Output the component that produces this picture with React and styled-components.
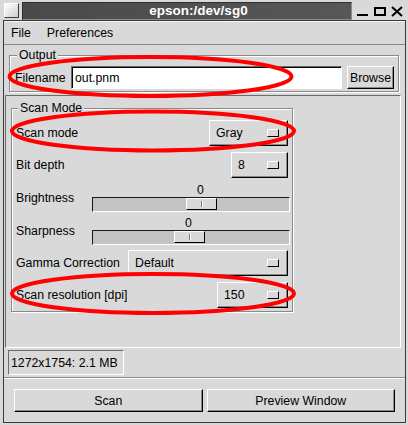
import React from "react";
import styled, { createGlobalStyle } from "styled-components";

const GlobalStyle = createGlobalStyle`
  html, body {
    margin: 0;
    padding: 0;
    background: #d9d9d9;
  }
  * {
    box-sizing: border-box;
  }
`;

const App = () => {
  return (
    <>
      <GlobalStyle />
      <Window>
        <TitleBar>
          <WinIcon />
          <Title>epson:/dev/sg0</Title>
          <TitleControls width="48" height="14" viewBox="0 0 48 14">
            <path d="M2 11h11" stroke="#000" strokeWidth="2" fill="none" />
            <rect x="20" y="4" width="10" height="7" stroke="#000" strokeWidth="2" fill="none" />
            <path d="M37 3l10 9M47 3l-10 9" stroke="#000" strokeWidth="2" fill="none" />
          </TitleControls>
        </TitleBar>

        <Client>
          <MenuBar>
            <MenuItem>File</MenuItem>
            <MenuItem>Preferences</MenuItem>
          </MenuBar>

          <OutputFrame>
            <Legend>Output</Legend>
            <FileRow>
              <FileLabel>Filename</FileLabel>
              <Entry>out.pnm</Entry>
              <BrowseButton>Browse</BrowseButton>
            </FileRow>
          </OutputFrame>

          <ScanArea>
            <ScanFrame>
              <Legend>Scan Mode</Legend>
              <Row $h={26} $mt={0}>
                <RowLabel>Scan mode</RowLabel>
                <OptionMenu $w={79}>
                  Gray
                  <Indicator />
                </OptionMenu>
              </Row>
              <Row $h={26} $mt={6}>
                <RowLabel>Bit depth</RowLabel>
                <OptionMenu $w={57}>
                  8
                  <Indicator />
                </OptionMenu>
              </Row>
              <Row $h={29} $mt={5}>
                <RowLabel>Brightness</RowLabel>
                <Slider value={0} offset={93} />
              </Row>
              <Row $h={29} $mt={4}>
                <RowLabel>Sharpness</RowLabel>
                <Slider value={0} offset={81} />
              </Row>
              <Row $h={26} $mt={5}>
                <RowLabel>Gamma Correction</RowLabel>
                <OptionMenu $w={160}>
                  Default
                  <Indicator />
                </OptionMenu>
              </Row>
              <Row $h={26} $mt={6}>
                <RowLabel>Scan resolution [dpi]</RowLabel>
                <OptionMenu $w={71}>
                  150
                  <Indicator />
                </OptionMenu>
              </Row>
            </ScanFrame>
          </ScanArea>

          <StatusBox>1272x1754: 2.1 MB</StatusBox>
          <Separator />

          <ButtonRow>
            <PushButton>Scan</PushButton>
            <PushButton>Preview Window</PushButton>
          </ButtonRow>
        </Client>

        <Marks width="408" height="425" viewBox="0 0 408 425">
          <ellipse cx="150.5" cy="76.5" rx="141" ry="19.5" />
          <ellipse cx="153" cy="131" rx="141" ry="19.5" />
          <ellipse cx="153" cy="293.5" rx="141" ry="19.5" />
        </Marks>
      </Window>
    </>
  );
};

const Slider = ({ value, offset }) => {
  return (
    <SliderBox>
      <SliderValue style={{ marginLeft: offset }}>{value}</SliderValue>
      <Trough>
        <Thumb style={{ marginLeft: offset }} />
      </Trough>
    </SliderBox>
  );
};

export default App;

const Window = styled.div`
  position: relative;
  width: 408px;
  height: 425px;
  display: flex;
  flex-direction: column;
  padding: 1px 2px 2px 3px;
  background: #d9d9d9;
  font-family: "Liberation Sans", Arial, sans-serif;
  font-size: 12.3px;
  line-height: 14px;
  color: #000;
  overflow: hidden;
`;

const TitleBar = styled.div`
  height: 19px;
  display: flex;
  align-items: center;
`;

const WinIcon = styled.div`
  width: 15px;
  height: 15px;
  margin-left: 1px;
  background: linear-gradient(135deg, #ffffff, #cdcdcd);
  border: 1px solid;
  border-color: #ffffff #3a3a3a #3a3a3a #ffffff;
`;

const Title = styled.div`
  width: 330px;
  height: 18px;
  margin-left: 3px;
  padding-left: 23px;
  background: linear-gradient(90deg, #4a4a4a, #575757);
  border: 1px solid;
  border-color: #2e2e2e #8c8c8c #8c8c8c #2e2e2e;
  color: #ffffff;
  font-size: 13.5px;
  font-weight: bold;
  line-height: 16px;
  text-align: center;
`;

const TitleControls = styled.svg`
  margin-left: 3px;
  display: block;
`;

const Client = styled.div`
  flex: 1;
  display: flex;
  flex-direction: column;
  border: 1px solid #3a3a3a;
`;

const MenuBar = styled.div`
  height: 24px;
  display: flex;
  align-items: center;
  gap: 16px;
  padding-left: 7px;
  border-top: 1px solid #f4f4f4;
  border-bottom: 1px solid #8c8c8c;
`;

const MenuItem = styled.span`
  white-space: nowrap;
`;

const Frame = styled.fieldset`
  min-width: 0;
  margin: 0;
  border: 1px solid #8a8a8a;
  box-shadow: inset 1px 1px 0 #ffffff, 1px 1px 0 #ffffff;
`;

const OutputFrame = styled(Frame)`
  margin: 3px 6px 0 5px;
  padding: 4px 4px 2px 5px;
`;

const Legend = styled.legend`
  margin-left: 2px;
  padding: 0 2px;
  background: #d9d9d9;
  line-height: 14px;
`;

const FileRow = styled.div`
  height: 23px;
  display: flex;
  align-items: center;
`;

const FileLabel = styled.span`
  width: 56px;
  flex: none;
`;

const Entry = styled.div`
  flex: 1;
  height: 23px;
  padding: 0 3px;
  display: flex;
  align-items: center;
  background: #ffffff;
  border: 1px solid;
  border-color: #6b6b6b #ffffff #ffffff #6b6b6b;
  box-shadow: inset 1px 1px 0 #000000;
`;

const Raised = styled.div`
  background: #d9d9d9;
  border: 1px solid;
  border-color: #ffffff #000000 #000000 #ffffff;
  box-shadow: inset -1px -1px 0 #8a8a8a;
`;

const BrowseButton = styled(Raised)`
  width: 47px;
  height: 23px;
  margin-left: 5px;
  display: flex;
  align-items: center;
  justify-content: center;
`;

const ScanArea = styled.div`
  height: 253px;
  margin: 3px 4px 0 1px;
  padding: 5px;
  border: 1px solid;
  border-color: #6a6a6a #ffffff #ffffff #6a6a6a;
`;

const ScanFrame = styled(Frame)`
  width: 282px;
  padding: 5px 4px 3px 4px;
`;

const Row = styled.div`
  height: ${(p) => p.$h}px;
  margin-top: ${(p) => p.$mt}px;
  display: flex;
  align-items: center;
`;

const RowLabel = styled.span`
  flex: 1;
  white-space: nowrap;
`;

const OptionMenu = styled(Raised)`
  width: ${(p) => p.$w}px;
  height: 26px;
  display: flex;
  align-items: center;
  justify-content: space-between;
  padding: 0 8px 0 6px;
`;

const Indicator = styled.span`
  width: 12px;
  height: 8px;
  background: #d9d9d9;
  border: 1px solid;
  border-color: #ffffff #000000 #000000 #ffffff;
`;

const SliderBox = styled.div`
  width: 198px;
  margin-right: -2px;
  display: flex;
  flex-direction: column;
`;

const SliderValue = styled.div`
  width: 31px;
  height: 14px;
  text-align: center;
`;

const Trough = styled.div`
  height: 15px;
  background: #c3c3c3;
  border: 1px solid;
  border-color: #1a1a1a #ffffff #ffffff #1a1a1a;
`;

const Thumb = styled.div`
  position: relative;
  width: 31px;
  height: 12px;
  background: #d9d9d9;
  border: 1px solid;
  border-color: #ffffff #000000 #000000 #ffffff;

  &::after {
    content: "";
    position: absolute;
    left: 14px;
    top: 2px;
    width: 1px;
    height: 6px;
    background: #7a7a7a;
    box-shadow: 1px 0 0 #ffffff;
  }
`;

const StatusBox = styled.div`
  width: 116px;
  height: 25px;
  margin: 2px 0 0 4px;
  padding-left: 2px;
  display: flex;
  align-items: center;
  white-space: nowrap;
  border: 1px solid;
  border-color: #6a6a6a #ffffff #ffffff #6a6a6a;
`;

const Separator = styled.div`
  height: 2px;
  margin-top: 2px;
  border-top: 1px solid #8a8a8a;
  border-bottom: 1px solid #ffffff;
`;

const ButtonRow = styled.div`
  display: flex;
  gap: 4px;
  margin-top: 10px;
  padding: 0 10px;
`;

const PushButton = styled(Raised)`
  flex: 1;
  height: 23px;
  display: flex;
  align-items: center;
  justify-content: center;
`;

const Marks = styled.svg`
  position: absolute;
  top: 0;
  left: 0;
  pointer-events: none;

  ellipse {
    fill: none;
    stroke: #ff0000;
    stroke-width: 4;
  }
`;
